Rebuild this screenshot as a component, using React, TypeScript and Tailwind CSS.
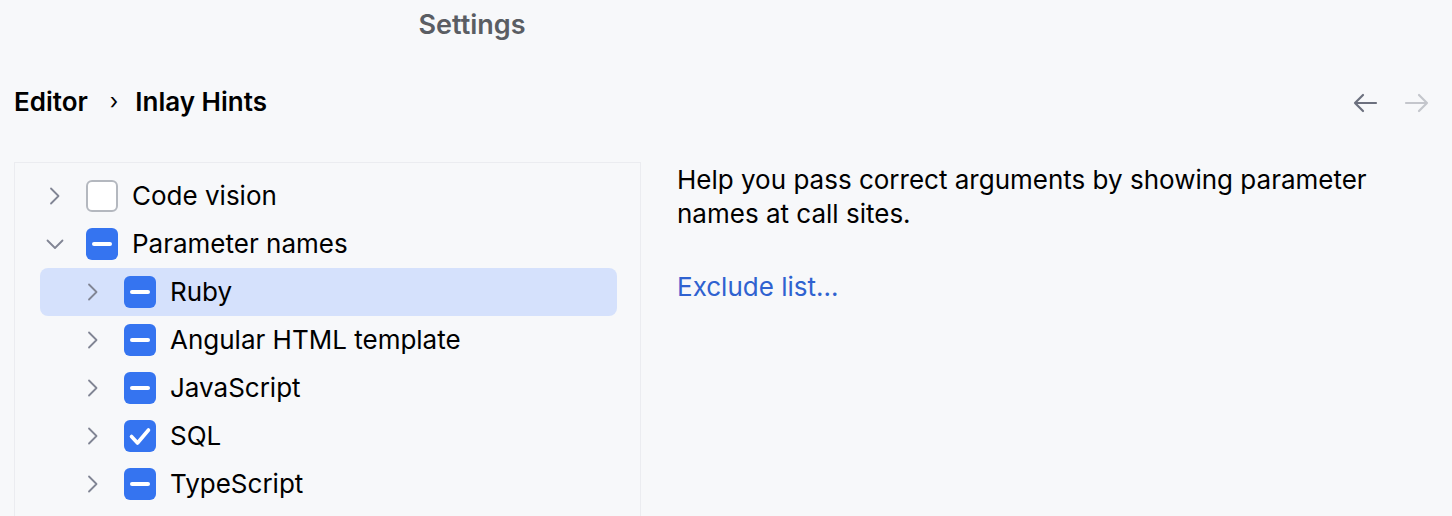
import React from "react";

type Row = {
  label: string;
  level: number;
  state: "empty" | "partial" | "checked";
  expanded?: boolean;
  selected?: boolean;
};

const rows: Row[] = [
  { label: "Code vision", level: 0, state: "empty" },
  { label: "Parameter names", level: 0, state: "partial", expanded: true },
  { label: "Ruby", level: 1, state: "partial", selected: true },
  { label: "Angular HTML template", level: 1, state: "partial" },
  { label: "JavaScript", level: 1, state: "partial" },
  { label: "SQL", level: 1, state: "checked" },
  { label: "TypeScript", level: 1, state: "partial" },
];

const Chevron = ({ down }: { down?: boolean }) => (
  <svg width="28" height="20" viewBox="0 0 28 20" fill="none">
    {down ? (
      <path d="M7.5 6.5l7.5 7.5 7.5-7.5" stroke="#818594" strokeWidth="1.8" strokeLinecap="round" strokeLinejoin="round" />
    ) : (
      <path d="M11 2.5l7.5 7.5-7.5 7.5" stroke="#818594" strokeWidth="1.8" strokeLinecap="round" strokeLinejoin="round" />
    )}
  </svg>
);

const Checkbox = ({ state }: { state: Row["state"] }) => {
  if (state === "empty") {
    return <div className="w-8 h-8 rounded-[6px] border-2 border-[#b4b8bf] bg-white shrink-0" />;
  }
  return (
    <div className="w-8 h-8 rounded-[6px] bg-[#3574f0] flex items-center justify-center shrink-0">
      {state === "partial" ? (
        <div className="w-[20px] h-[4px] rounded-full bg-white" />
      ) : (
        <svg width="26" height="26" viewBox="0 0 26 26" fill="none">
          <path d="M4.5 13.5l6 6.5 11-13" stroke="white" strokeWidth="3.6" strokeLinecap="round" strokeLinejoin="round" />
        </svg>
      )}
    </div>
  );
};

export default function App() {
  return (
    <div
      className="w-[1452px] h-[516px] bg-[#f7f8fa] overflow-hidden flex flex-col"
      style={{ fontFamily: "Inter, 'Noto Sans', sans-serif" }}
    >
      {/* Title */}
      <div className="h-[50px] w-[944px] flex items-center justify-center">
        <span className="text-[27px] font-semibold text-[#5a5d63]">Settings</span>
      </div>

      {/* Breadcrumb + nav */}
      <div className="h-[102px] flex items-center pl-[14px] pr-[22px]">
        <span className="text-[26px] font-semibold text-black">Editor</span>
        <span className="ml-[22px] mr-[17px] text-[22px] text-black">›</span>
        <span className="text-[26px] font-semibold text-black">Inlay Hints</span>
        <div className="ml-auto flex items-center gap-[26px] pt-[4px]">
          <svg width="26" height="22" viewBox="0 0 26 22" fill="none">
            <path d="M24 11H3M11 3l-8 8 8 8" stroke="#6c707e" strokeWidth="2.2" strokeLinecap="round" strokeLinejoin="round" />
          </svg>
          <svg width="26" height="22" viewBox="0 0 26 22" fill="none">
            <path d="M2 11h21M15 3l8 8-8 8" stroke="#c4c6cc" strokeWidth="2.2" strokeLinecap="round" strokeLinejoin="round" />
          </svg>
        </div>
      </div>

      <div className="flex flex-1 pt-[10px]">
        {/* Tree */}
        <div className="ml-[14px] w-[627px] border-t border-l border-r border-[#ebecf0] pt-[9px] pl-[25px] pr-[23px]">
          {rows.map((r) => (
            <div
              key={r.label}
              className={`h-12 flex items-center rounded-[8px] ${r.selected ? "bg-[#d5e1fc]" : ""} ${
                r.level === 1 ? "pl-[38px]" : "pl-0"
              }`}
            >
              <div className="w-[28px] flex items-center justify-start">
                <Chevron down={r.expanded} />
              </div>
              <div className="ml-[18px]">
                <Checkbox state={r.state} />
              </div>
              <span className="ml-[14px] text-[26px] text-black leading-none">{r.label}</span>
            </div>
          ))}
        </div>

        {/* Description */}
        <div className="pl-[36px] pt-[1px] w-[740px]">
          <p className="text-[26px] leading-[34px] text-black">
            Help you pass correct arguments by showing parameter names at call sites.
          </p>
          <a className="block mt-[36px] text-[26px] text-[#2f62d0]">Exclude list...</a>
        </div>
      </div>
    </div>
  );
}
